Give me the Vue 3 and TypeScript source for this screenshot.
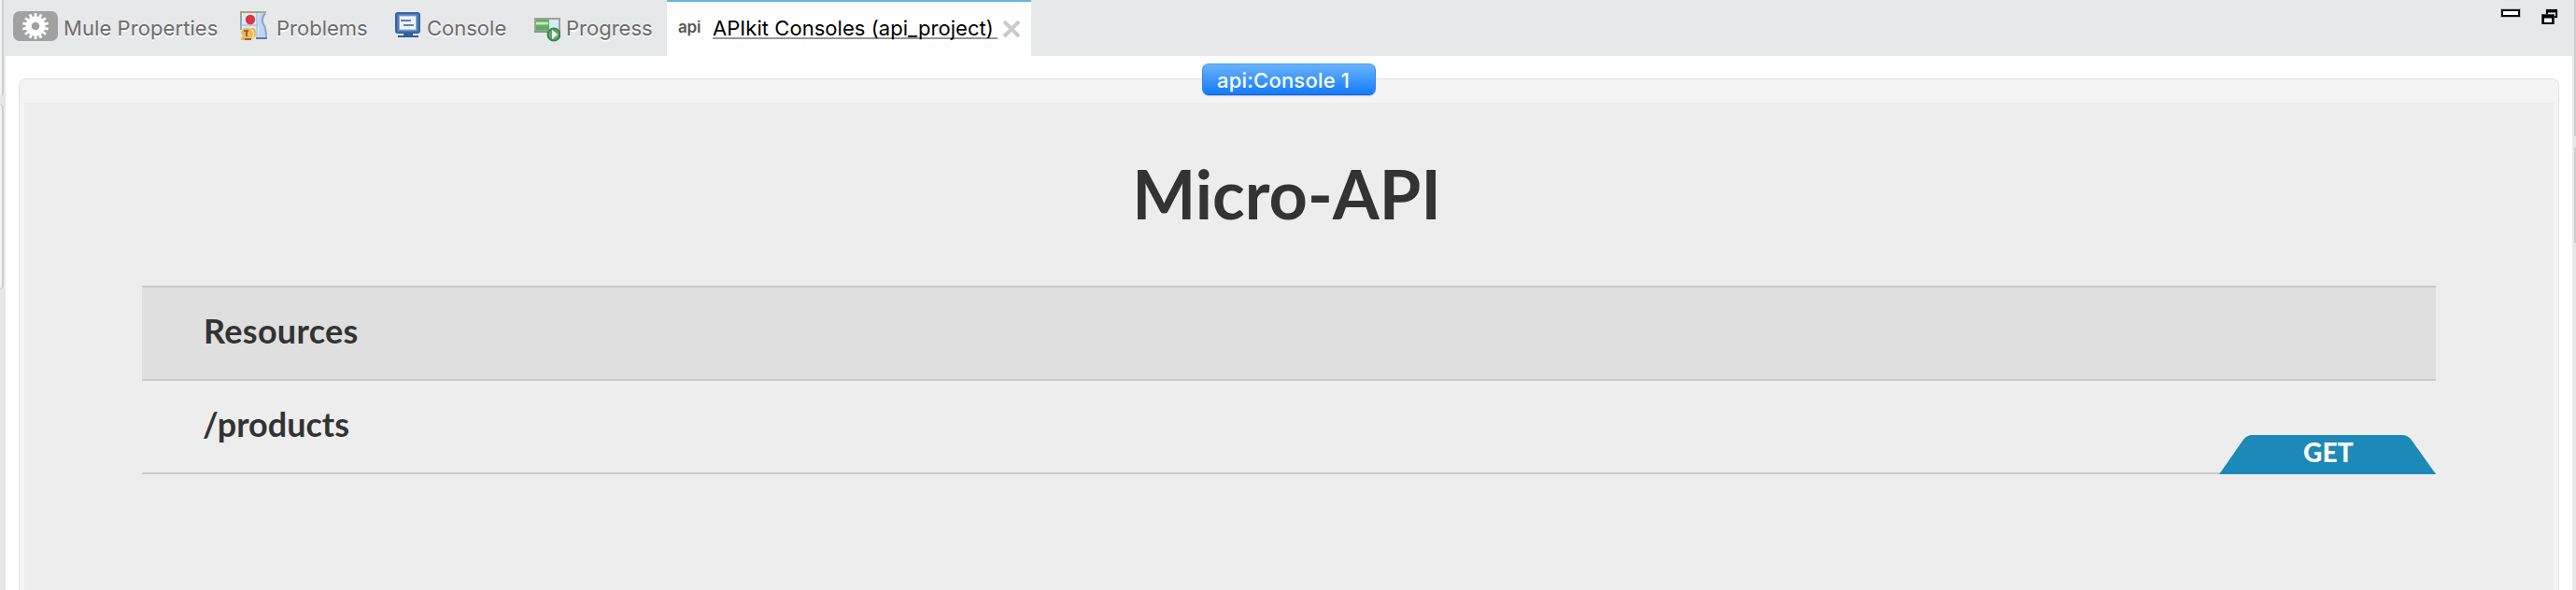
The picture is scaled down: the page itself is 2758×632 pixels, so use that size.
<script setup lang="ts">
interface Tab {
  id: string
  label: string
}

const tabs: Tab[] = [
  { id: 'mule', label: 'Mule Properties' },
  { id: 'problems', label: 'Problems' },
  { id: 'console', label: 'Console' },
  { id: 'progress', label: 'Progress' },
]

const activeTab = 'APIkit Consoles (api_project)'
const consoleName = 'api:Console 1'
const apiTitle = 'Micro-API'
const resources = [{ path: '/products', method: 'GET' }]
const teeth = Array.from({ length: 14 }, (_, i) => (i * 360) / 14)
</script>

<template>
  <div class="window">
    <div class="gutter left">
      <i class="pane first"></i>
      <i class="pane second"></i>
    </div>
    <main class="view">
      <nav class="tabs">
        <div v-for="tab in tabs" :key="tab.id" class="tab" :class="tab.id">
          <svg v-if="tab.id === 'mule'" class="icon" width="48" height="32" viewBox="0 0 48 32">
            <rect width="48" height="32" rx="7" fill="#a1a1a1" />
            <g fill="#fff">
              <rect v-for="a in teeth" :key="a" x="22.6" y="2" width="2.8" height="6" :transform="`rotate(${a} 24 16)`" />
              <circle cx="24" cy="16" r="10.6" />
            </g>
            <circle cx="24" cy="16" r="4.3" fill="#a1a1a1" />
          </svg>
          <svg v-else-if="tab.id === 'problems'" class="icon" width="30" height="32" viewBox="0 0 30 32">
            <path d="M1 1H26L24 5V12L27 18V28H1Z" fill="#dceaf8" />
            <path d="M21 2H27L24 7Q23 13 27 18V29H17Q21 26 20 19Q18 12 21 2Z" fill="#bdd7ef" />
            <path d="M1 15H19" stroke="#a7c5e4" stroke-width="1.5" />
            <path d="M18 2V28" stroke="#a9c6e4" stroke-width="1.5" />
            <path d="M27 2Q22 8 25 14Q28 18 28 28" fill="none" stroke="#91a5c4" stroke-width="2" />
            <path d="M1 20V1H22" fill="none" stroke="#aaa66c" stroke-width="2" />
            <path d="M22 1H28" stroke="#9eacbc" stroke-width="2" />
            <path d="M1 6V19" stroke="#90a9bd" stroke-width="2" />
            <path d="M17 29H29" stroke="#61799f" stroke-width="2" />
            <circle cx="11" cy="9" r="5.2" fill="#df3541" />
            <path d="M3 19Q7 16 11 19Q16 16 17 22Q18 28 13 30L9 31H1V28Q4 28 2 25Q0 22 3 19Z" fill="#efb75c" />
            <path d="M12 20Q17 23 13 29" fill="none" stroke="#fbe0aa" stroke-width="1.5" />
            <path d="M4 21H9M7 20V27M5 30H12" stroke="#8d682c" stroke-width="2" />
          </svg>
          <svg v-else-if="tab.id === 'console'" class="icon" width="28" height="28" viewBox="0 0 28 28">
            <rect x="1" y="1" width="25" height="21" rx="2" fill="#5079b6" stroke="#3864a6" stroke-width="2" />
            <rect x="4.5" y="4" width="18" height="15" fill="#edf5fc" stroke="#8eafcf" />
            <path d="M6 9H17M9 14H20" stroke="#6279ae" stroke-width="2" />
            <path d="M9 23H19V25H25V27H3V25H9Z" fill="#315d97" />
          </svg>
          <svg v-else class="icon" width="28" height="26" viewBox="0 0 28 26">
            <rect x="1" y="1" width="26" height="13" fill="#d5ecf6" stroke="#a0a292" stroke-width="2" />
            <path d="M2 2H16V13H2Z" fill="#5eaf60" />
            <path d="M2 6H15" stroke="#c5e7bd" stroke-width="3" />
            <path d="M0 15H15" stroke="#83939f" stroke-width="2" />
            <circle cx="21" cy="18" r="6.5" fill="#60ad6e" stroke="#38854d" stroke-width="2" />
            <path d="M19 13L25 18L19 23Z" fill="#fff" />
          </svg>
          <span class="label">{{ tab.label }}</span>
        </div>
        <div class="tab active">
          <span class="api">api</span>
          <span class="label">{{ activeTab }}</span>
          <svg class="close" width="20" height="20" viewBox="0 0 20 20">
            <path d="M2 2L18 18M18 2L2 18" stroke="#cbcbcb" stroke-width="4" />
          </svg>
        </div>
        <div class="controls">
          <svg width="22" height="10" viewBox="0 0 22 10">
            <rect width="22" height="10" fill="#bfc0c1" />
            <rect x="2" y="2" width="18" height="6" fill="#fff" stroke="#080808" stroke-width="2" />
          </svg>
          <svg width="18" height="18" viewBox="0 0 18 18">
            <rect x="4.5" y="0.5" width="13" height="10" fill="#bfc0c1" />
            <rect x="6" y="2" width="10" height="7" fill="#fff" stroke="#000" stroke-width="2" />
            <path d="M5 3H17" stroke="#000" stroke-width="3" />
            <rect x="0" y="6" width="14" height="11" fill="#444" />
            <rect x="2" y="8" width="10" height="8" fill="#fff" stroke="#000" stroke-width="2" />
            <path d="M1 9H13" stroke="#000" stroke-width="3" />
          </svg>
        </div>
      </nav>

      <section class="group">
        <div class="console-tab">{{ consoleName }}</div>
        <div class="page">
          <h1>{{ apiTitle }}</h1>
          <div class="list">
            <h2 class="row head">Resources</h2>
            <div v-for="r in resources" :key="r.path" class="row resource">
              <span>{{ r.path }}</span>
              <div class="method">
                <svg width="232" height="42" viewBox="0 0 232 42">
                  <path d="M0 42L25.500 5.500Q29.500 0 35 0H196Q202 0 206 5.500L232 42Z" fill="#1c89b8" />
                </svg>
                <b>{{ r.method }}</b>
              </div>
            </div>
          </div>
        </div>
      </section>
    </main>
    <div class="gutter right">
      <i class="pane first"></i>
      <i class="pane second"></i>
    </div>
  </div>
</template>

<style>
body {
  margin: 0;
  overflow: hidden;
}
</style>

<style scoped>
* {
  box-sizing: border-box;
}
.window {
  display: flex;
  width: 2758px;
  height: 632px;
  overflow: hidden;
  background: #e7e8ea;
  font-family: Inter, "Liberation Sans", sans-serif;
}
.gutter {
  flex: none;
  display: flex;
  flex-direction: column;
  overflow: hidden;
}
.left {
  width: 6px;
  gap: 9px;
}
.right {
  width: 4px;
  gap: 12px;
  padding-left: 2px;
}
.pane {
  flex: none;
  background: #f3f3f4;
}
.left .pane {
  width: 4px;
  border-right: 2px solid #cfcfcf;
}
.left .first {
  height: 103px;
  border-bottom-right-radius: 5px;
}
.left .second {
  height: 198px;
  border-top: 1px solid #cfcfcf;
  border-bottom: 1px solid #cfcfcf;
  border-radius: 0 5px 5px 0;
}
.right .pane {
  width: 2px;
  background: #cfcfcf;
}
.right .first {
  height: 146px;
}
.right .second {
  height: 102px;
}
.view {
  width: 2748px;
  height: 632px;
  display: flex;
  flex-direction: column;
  background: #fff;
}
.tabs {
  height: 60px;
  flex: none;
  display: flex;
  background: #e7e8ea;
}
.tab {
  flex: none;
  display: flex;
  padding-top: 12px;
  color: #6d6d6d;
  font-size: 22px;
  line-height: 36px;
  text-shadow: 0 2px 0 #fff;
  white-space: nowrap;
}
.icon {
  flex: none;
}
.mule {
  width: 244px;
  padding-left: 8px;
}
.mule .label {
  margin-left: 6px;
  letter-spacing: 0.08px;
}
.problems {
  width: 165px;
  padding-left: 7px;
}
.problems .label {
  margin-left: 9px;
}
.console {
  width: 148px;
  padding-left: 8px;
}
.console .icon {
  margin-top: 1px;
}
.console .label {
  margin-left: 6px;
}
.progress {
  width: 145px;
  padding-left: 9px;
}
.progress .icon {
  margin-top: 7px;
}
.progress .label {
  margin-left: 6px;
}
.active {
  width: 390px;
  height: 60px;
  margin-left: 6px;
  padding: 10px 0 0 12px;
  border-top: 2px solid #69b5dc;
  background: #fff;
  color: #000;
  text-shadow: none;
}
.active .api {
  width: 37px;
  color: #555;
  font-size: 17px;
  font-weight: 600;
  letter-spacing: -0.2px;
  line-height: 35px;
}
.active .label {
  width: 305px;
  height: 30px;
  border-bottom: 2px solid #999;
  letter-spacing: 0.05px;
}
.close {
  margin: 9px 0 0 5px;
}
.controls {
  display: flex;
  gap: 22px;
  margin-left: auto;
  padding: 9px 15px 0 0;
}
.group {
  flex: 1;
  margin: 24px 14px 0;
  padding: 0 5px;
  border: 1px solid #e3e3e3;
  border-bottom: 0;
  border-radius: 8px 8px 0 0;
  background: #f4f4f4;
  display: flex;
  flex-direction: column;
}
.console-tab {
  width: 186px;
  height: 34px;
  margin: -17px 0 8px 1261px;
  padding-left: 15px;
  flex: none;
  border: 1px solid #2f86f0;
  border-top-color: #4da0f2;
  border-bottom-color: #0d62e8;
  border-radius: 7px;
  background: linear-gradient(#6ab2fa, #147cfe);
  box-shadow: 0 1px 1px #0003;
  color: #fff;
  font-size: 22px;
  font-weight: 500;
  line-height: 34px;
  letter-spacing: 0.2px;
  white-space: nowrap;
}
.page {
  flex: 1;
  padding: 0 126px;
  background: #ededed;
  color: #333;
  font-family: Lato, sans-serif;
}
h1 {
  margin: 0;
  height: 196px;
  padding: 54px 5px 0 0;
  font-size: 72px;
  line-height: 86px;
  font-weight: 700;
  text-align: center;
}
.list {
  border-top: 2px solid #c9c9c9;
}
.row {
  display: flex;
  justify-content: space-between;
  height: 100px;
  margin: 0;
  padding-left: 66px;
  border-bottom: 2px solid #c9c9c9;
  font-size: 36px;
  line-height: 92px;
  font-weight: 700;
}
.head {
  background: #dfdfdf;
  letter-spacing: 0.3px;
}
.resource {
  padding-left: 65px;
}
.method {
  display: grid;
  width: 232px;
  height: 42px;
  margin-top: 58px;
}
.method > * {
  grid-area: 1 / 1;
}
.method b {
  padding-left: 2px;
  color: #fff;
  font-size: 28px;
  line-height: 37px;
  letter-spacing: 0.3px;
  text-align: center;
}
</style>
